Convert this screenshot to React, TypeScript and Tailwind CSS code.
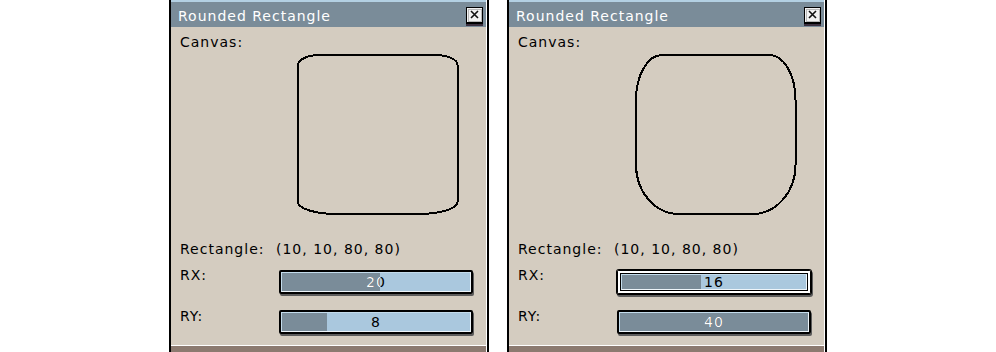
import React from "react";

type Win = {
  rx: number;
  ry: number;
  focused: boolean;
  path: string;
};

const wins: Win[] = [
  {
    rx: 20,
    ry: 8,
    focused: false,
    path: "M 44 21 H 159.5 A 22 10 0 0 1 181.5 31 V 168 A 39 12 0 0 1 142.5 180 H 61 A 39 12 0 0 1 22 168 V 31 A 22 10 0 0 1 44 21 Z",
  },
  {
    rx: 16,
    ry: 40,
    focused: true,
    path: "M 48 21 H 155.5 A 26 45 0 0 1 181.5 66 V 131 A 43 49 0 0 1 138.5 180 H 65 A 43 49 0 0 1 22 131 V 66 A 26 45 0 0 1 48 21 Z",
  },
];

function CloseButton() {
  return (
    <svg width="17" height="19" viewBox="0 0 17 19" shapeRendering="crispEdges">
      <rect x="0" y="16" width="17" height="3" fill="#3b3040" />
      <rect x="0.5" y="0.5" width="16" height="16" fill="#f2f2f2" stroke="#000" />
      <rect x="1" y="15" width="15" height="2" fill="#000" />
      <rect x="2" y="2" width="13" height="12" fill="none" stroke="#b8b8b8" strokeWidth="1" />
      <path d="M5 4 L12 11 M12 4 L5 11" stroke="#111" strokeWidth="1.6" shapeRendering="auto" />
    </svg>
  );
}

function Slider({ value, focused }: { value: number; focused: boolean }) {
  const pct = Math.min(100, ((value + 2) / 42) * 100);
  const track = (
    <div className="relative h-full border border-t-[#c4dcec] border-l-[#c4dcec] border-r-[#eef5fa] border-b-[#eef5fa] bg-[#aac8de]">
      <div className="absolute inset-y-0 left-0 bg-[#7a8c99]" style={{ width: `${pct}%` }} />
      <div className="absolute inset-0 flex items-center justify-center text-black">{value}</div>
      <div
        className="absolute inset-0 flex items-center justify-center text-white"
        style={{ clipPath: `inset(0 ${100 - pct}% 0 0)` }}
      >
        {value}
      </div>
    </div>
  );

  if (focused) {
    return (
      <div className="h-[24px] w-[194px] rounded-[2px] border border-black shadow-[0_0_0_1px_#000,1px_2px_0_1px_#5c5c5c]">
        <div className="h-full border-2 border-white">
          <div className="h-full border border-black">{track}</div>
        </div>
      </div>
    );
  }

  return (
    <div className="h-[24px] w-[194px] rounded-[2px] border-2 border-black shadow-[1px_2px_0_#5c5c5c]">
      {track}
    </div>
  );
}

function Window({ win }: { win: Win }) {
  return (
    <div className="flex h-[352px] w-[320px] flex-col overflow-hidden border-x-2 border-black">
      <div className="flex flex-1 flex-col border-r border-white">
        <div className="flex h-[27px] items-center justify-between border-t-2 border-[#b3d0e3] bg-[#7a8c99] pl-[7px] pr-[3px] text-white">
          <span className="pt-[2px]">Rounded Rectangle</span>
          <div className="mt-[4px]">
            <CloseButton />
          </div>
        </div>

        <div className="flex-1 border-b border-white bg-[#d4ccc0] pl-[9px] pt-[7px] text-black">
          <div className="flex">
            <span className="w-[96px]">Canvas:</span>
            <svg width="200" height="200" viewBox="0 0 200 200" shapeRendering="crispEdges">
              <path d={win.path} fill="none" stroke="#000" strokeWidth="2" />
            </svg>
          </div>

          <div className="mt-[7px] flex">
            <span className="w-[96px]">Rectangle:</span>
            <span>(10, 10, 80, 80)</span>
          </div>

          <div className="mt-[10px] flex items-start">
            <span className="w-[99px]">RX:</span>
            <div className="mt-[3px]">
              <Slider value={win.rx} focused={win.focused} />
            </div>
          </div>

          <div className="mt-[14px] flex items-start">
            <span className="w-[99px]">RY:</span>
            <div className="mt-[2px]">
              <Slider value={win.ry} focused={false} />
            </div>
          </div>
        </div>

        <div className="h-[6px] shrink-0 bg-[#8c7a70]" />
      </div>
    </div>
  );
}

export default function App() {
  return (
    <div className="flex h-[352px] w-[996px] justify-center gap-[18px] overflow-hidden bg-white font-['DejaVu_Sans',sans-serif] text-[14px] leading-4 tracking-[1px]">
      {wins.map((w, i) => (
        <Window key={i} win={w} />
      ))}
    </div>
  );
}
